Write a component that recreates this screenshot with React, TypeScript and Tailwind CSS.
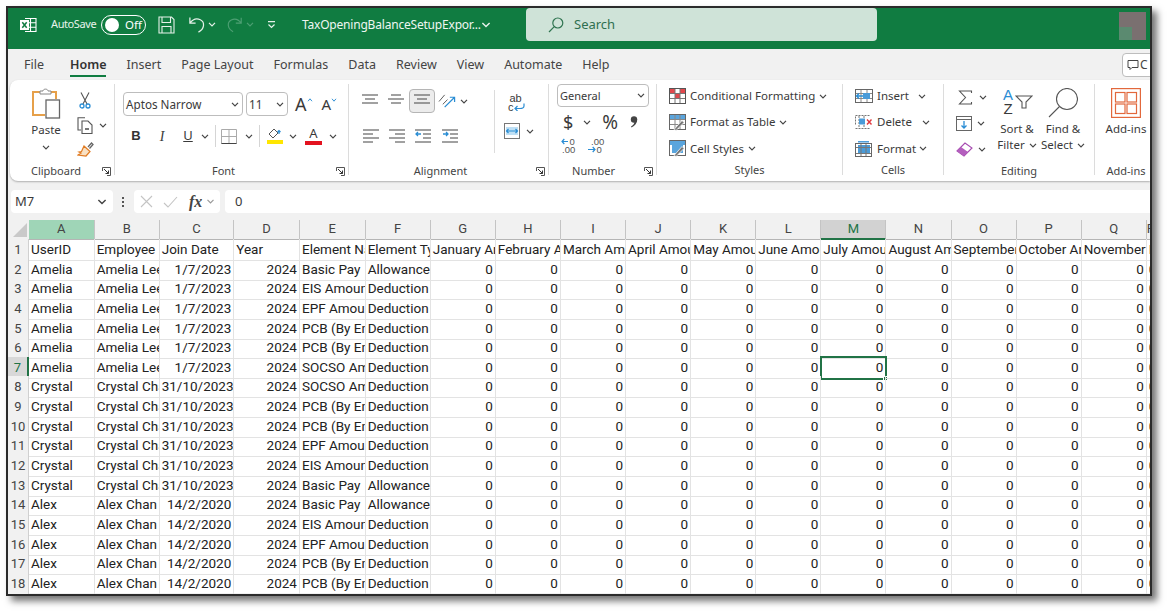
import React from 'react';
import type { ReactNode } from 'react';

const GRID =
  'grid grid-cols-[21px_65.7px_65px_74.6px_65.7px_65.7px_repeat(12,65.1px)_1fr]';

const columns = ['A', 'B', 'C', 'D', 'E', 'F', 'G', 'H', 'I', 'J', 'K', 'L', 'M', 'N', 'O', 'P', 'Q', 'R'];
const headers = [
  'UserID', 'Employee Name', 'Join Date', 'Year', 'Element Name', 'Element Type',
  'January Amount', 'February Amount', 'March Amount', 'April Amount', 'May Amount', 'June Amount',
  'July Amount', 'August Amount', 'September Amount', 'October Amount', 'November Amount', 'December Amount',
];

const BASIC = ['Basic Pay', 'Allowance'];
const EIS = ['EIS Amount', 'Deduction'];
const EPF = ['EPF Amount', 'Deduction'];
const PCB = ['PCB (By Employee)', 'Deduction'];
const SOCSO = ['SOCSO Amount', 'Deduction'];

const AMELIA = ['Amelia', 'Amelia Lee', '1/7/2023'];
const CRYSTAL = ['Crystal', 'Crystal Chan', '31/10/2023'];
const ALEX = ['Alex', 'Alex Chan', '14/2/2020'];

const rows = [
  [AMELIA, BASIC], [AMELIA, EIS], [AMELIA, EPF], [AMELIA, PCB], [AMELIA, PCB], [AMELIA, SOCSO],
  [CRYSTAL, SOCSO], [CRYSTAL, PCB], [CRYSTAL, PCB], [CRYSTAL, EPF], [CRYSTAL, EIS], [CRYSTAL, BASIC],
  [ALEX, BASIC], [ALEX, EIS], [ALEX, EPF], [ALEX, PCB], [ALEX, PCB],
];

const tabs = ['File', 'Home', 'Insert', 'Page Layout', 'Formulas', 'Data', 'Review', 'View', 'Automate', 'Help'];

function Chev({ className = '', color = '#444' }: { className?: string; color?: string }) {
  return (
    <svg viewBox="0 0 8 5" className={`h-[5px] w-[8px] shrink-0 ${className}`} fill="none" stroke={color} strokeWidth="1.2">
      <path d="M1 .8 4 3.8 7 .8" />
    </svg>
  );
}

function Launcher() {
  return (
    <svg viewBox="0 0 9 9" className="absolute right-[3px] top-[2px] h-[9px] w-[9px]" fill="none" stroke="#555" strokeWidth="1">
      <path d="M.5 4V.5H8.500V8.500H5" />
      <path d="M2 2 6.500 6.500M6.500 3.500V6.500H3.500" stroke="#333" />
    </svg>
  );
}

function Group({ className, label, labelClass = '', launcher, children }: { className: string; label: string; labelClass?: string; launcher?: boolean; children: ReactNode }) {
  return (
    <div className={`relative h-[91px] shrink-0 ${className}`}>
      <div className="h-[81px]">{children}</div>
      <div className={`relative h-[10px] text-center text-[11px] leading-[12px] text-[#444] ${labelClass}`}>
        {label}
        {launcher && <Launcher />}
      </div>
    </div>
  );
}

function Lines({ rows: lines, arrow }: { rows: [number, number][]; arrow?: 'in' | 'out' }) {
  return (
    <svg viewBox="0 0 16 14" className="h-[14px] w-[16px]" fill="none" stroke="#555" strokeWidth="1.1">
      {lines.map(([a, b], i) => (
        <path key={i} d={`M${a} ${1 + i * 4}H${b}`} />
      ))}
      {arrow === 'out' && <path d="M6 5H1M3 3 1 5 3 7" stroke="#2a8dd4" strokeWidth="1.3" />}
      {arrow === 'in' && <path d="M1 5H6M4 3 6 5 4 7" stroke="#2a8dd4" strokeWidth="1.3" />}
    </svg>
  );
}

function CondIcon() {
  return (
    <svg viewBox="0 0 17 16" className="h-[16px] w-[17px] shrink-0" fill="none">
      <rect x=".5" y=".5" width="16" height="15" stroke="#555" fill="#fff" />
      <rect x="1" y="1" width="5" height="4" fill="#e2484d" />
      <rect x="11" y="1" width="5" height="4" fill="#e2484d" />
      <rect x="6" y="6" width="5" height="4" fill="#e2484d" />
      <path d="M1 5.500H16M1 10.500H16M6 1V15M11 1V15" stroke="#777" />
    </svg>
  );
}

function TableIcon({ cell }: { cell?: boolean }) {
  return (
    <svg viewBox="0 0 17 17" className="h-[17px] w-[17px] shrink-0" fill="none">
      <rect x=".5" y=".5" width="16" height="15" stroke="#666" fill="#fff" />
      <rect x="1" y="1" width="15" height="4" fill="#5aa5dd" />
      {cell ? <rect x="3" y="5" width="11" height="8" fill="#5aa5dd" /> : <path d="M1 5.500H16M1 10.500H16M6 1V15M11 1V15" stroke="#888" />}
      <path d="M5 15.500 13 6.500 15 8.500 7 16.500Z" fill="#777" stroke="#fff" strokeWidth=".7" />
    </svg>
  );
}

function CellIcon({ kind }: { kind: 'insert' | 'delete' | 'format' }) {
  return (
    <svg viewBox="0 0 18 16" className="h-[16px] w-[18px] shrink-0" fill="none">
      {kind === 'format' ? (
        <>
          <rect x=".5" y="2.500" width="16" height="13" stroke="#666" />
          <rect x="3" y="4" width="12" height="9" fill="#4a9bd8" />
          <path d="M1 6.500H16M1 12.500H16M6 3V15M11 3V15" stroke="#777" />
          <path d="M3 .8H14" stroke="#3b93d6" strokeWidth="1.4" />
        </>
      ) : kind === 'insert' ? (
        <>
          <rect x=".5" y="1.500" width="17" height="13" stroke="#666" />
          <path d="M1 5.500H17M1 10.500H17M6 2V14M12 2V14" stroke="#888" />
          <rect x="8" y="5" width="7" height="6" fill="#4a9bd8" />
          <path d="M8 8H1.500M4 5.500 1.500 8 4 10.500" stroke="#2a8dd4" strokeWidth="1.3" />
        </>
      ) : (
        <>
          <path d="M.5 4.500V1.500H15M.5 14.500H15M.5 10.500V5.500M4 2V14M9 2V14" stroke="#777" strokeDasharray="2 1" />
          <rect x="4" y="4.500" width="6" height="6" fill="#4a9bd8" />
          <path d="M12 5.500 16.500 10.500M16.500 5.500 12 10.500" stroke="#e0393e" strokeWidth="1.4" />
        </>
      )}
    </svg>
  );
}

function Cell({ text, right, col }: { text: string; right?: boolean; col: number }) {
  return (
    <div
      className={`h-full overflow-hidden whitespace-nowrap border-r border-b border-[#e3e3e3] px-[2px] leading-[21px] ${
        right ? 'text-right' : 'text-left'
      } ${col === 17 ? 'border-r-0' : ''}`}
    >
      {text}
    </div>
  );
}

function SelectBox({ className, text }: { className: string; text: string }) {
  return (
    <div className={`flex items-center justify-between rounded-[4px] border border-[#bdbdbd] bg-white pl-[2px] pr-[3px] ${className}`}>
      <span className="whitespace-nowrap pt-[1px]">{text}</span>
      <Chev />
    </div>
  );
}

export default function App() {
  return (
    <div className="h-[614px] w-[1171px] overflow-hidden bg-white font-['Noto_Sans',sans-serif] text-[#3a3a3a]">
      <div className="ml-[6px] mt-[6px] h-[590px] w-[1146px] overflow-hidden border-2 border-r-[2px] border-[#2b2b2b] bg-[#f1f1f1] shadow-[5px_5px_7px_rgba(0,0,0,0.55)]">
        {/* Title bar */}
        <div className="flex h-[41px] items-center bg-[#107c41] pb-[8px] text-white">
          <svg viewBox="0 0 18 18" className="ml-[11px] h-[18px] w-[18px]" fill="none" stroke="#fff" strokeWidth="1.1">
            <path d="M6 2.500H17V15.500H6M11.500 2.500V15.500M6 6.800H17M6 11.200H17" />
            <rect x="1" y="4" width="9" height="10" fill="#fff" stroke="none" />
            <path d="M3.300 6.300 7.700 11.700M7.700 6.300 3.300 11.700" stroke="#107c41" strokeWidth="1.500" />
          </svg>
          <span className="ml-[14px] w-[44px] whitespace-nowrap text-[11px] tracking-[-0.4px] text-[#e8f3ec]">AutoSave</span>
          <div className="ml-[6px] flex h-[20px] w-[45px] items-center rounded-full border border-white pl-[3px]">
            <div className="h-[14px] w-[14px] rounded-full bg-white" />
            <span className="ml-[6px] text-[11.5px]">Off</span>
          </div>
          <svg viewBox="0 0 17 18" className="ml-[12px] h-[18px] w-[17px]" fill="none" stroke="#e6f1ea" strokeWidth="1.1">
            <path d="M1 1H13.500L16 3.500V17H1ZM4 1V6.500H12.500V1M4 17V10.500H13V17" />
          </svg>
          <svg viewBox="0 0 20 19" className="ml-[13px] h-[19px] w-[19px]" fill="none" stroke="#e6f1ea" strokeWidth="1.3">
            <path d="M2 2V8H8M2 8C5 4 9 2.500 13 4.500 18 7 17.500 14 11 17.500" />
          </svg>
          <Chev className="ml-[1px]" color="#e6f1ea" />
          <svg viewBox="0 0 20 19" className="ml-[9px] h-[19px] w-[18px]" fill="none" stroke="#4d9f73" strokeWidth="1.3">
            <path d="M18 2V8H12M18 8C15 4 11 2.500 7 4.500 2 7 2.500 14 9 17.500" />
          </svg>
          <Chev className="ml-[3px]" color="#4d9f73" />
          <svg viewBox="0 0 9 8" className="ml-[13px] h-[8px] w-[9px]" fill="none" stroke="#e6f1ea" strokeWidth="1.2">
            <path d="M1 .6H8M1.500 3.500 4.500 6.500 7.500 3.500" />
          </svg>
          <span className="ml-[26px] w-[176px] whitespace-nowrap text-[12px] tracking-[-0.2px] text-[#eef6f1]">TaxOpeningBalanceSetupExpor...</span>
          <Chev className="ml-[3px] h-[6px] w-[10px]" color="#e6f1ea" />
          <div className="ml-[35px] flex h-[33px] w-[351px] items-center rounded-[4px] bg-[#cfe3d8] pl-[22px] text-[#2f6f50]">
            <svg viewBox="0 0 16 16" className="h-[16px] w-[16px]" fill="none" stroke="#2f7450" strokeWidth="1.2">
              <circle cx="9.800" cy="6" r="5" />
              <path d="M6 9.800 1 15" />
            </svg>
            <span className="ml-[7px] pl-[3px] text-[13px]">Search</span>
          </div>
          <div className="relative ml-[242px] mt-[3px] h-[28px] w-[27px] bg-[#7a7070]">
            <div className="absolute bottom-0 left-0 h-[13px] w-[13px] bg-[#5b8a70]" />
          </div>
        </div>

        {/* Tabs */}
        <div className="relative flex h-[31px] items-center pl-[16px] pt-[1px] text-[12.5px] text-[#444]">
          {tabs.map((tab) => (
            <div key={tab} className={`relative ${tab === 'File' ? 'mr-[26px]' : 'mr-[20px]'} ${tab === 'Home' ? 'font-semibold text-[#333]' : ''}`}>
              {tab}
              {tab === 'Home' && <div className="absolute -bottom-[3px] left-0 right-0 h-[2px] bg-[#107c41]" />}
            </div>
          ))}
          <div className="absolute -right-[2px] top-[4px] flex h-[24px] w-[30px] items-center rounded-l-[4px] border border-[#bdbdbd] bg-white pl-[4px] text-[12px]">
            <svg viewBox="0 0 12 12" className="h-[12px] w-[12px] shrink-0" fill="none" stroke="#444">
              <path d="M1 1.500H11V8.500H5L3 10.500V8.500H1Z" />
            </svg>
            <span className="ml-[1px]">C</span>
          </div>
        </div>

        {/* Ribbon */}
        <div className="ml-[2px] flex h-[101px] rounded-l-[8px] bg-white py-[4px] text-[11.5px] shadow-[0_1px_2px_rgba(0,0,0,0.28)]">
          <Group className="w-[105px] border-r border-[#dcdcdc]" label="Clipboard" labelClass="pr-[12px]" launcher>
            <div className="flex">
              <div className="ml-[15px] flex w-[42px] flex-col items-center pt-[4px]">
                <svg viewBox="0 0 30 31" className="h-[31px] w-[30px]" fill="none">
                  <path d="M9 4H2V27H14" stroke="#e6a04a" strokeWidth="2" />
                  <path d="M20 4H25V11" stroke="#e6a04a" strokeWidth="2" />
                  <path d="M9 6V3H12C12 .5 17 .5 17 3H20V6Z" fill="#fff" stroke="#888" />
                  <rect x="15" y="12" width="13.500" height="18" fill="#fff" stroke="#666" strokeWidth="1.300" />
                </svg>
                <span className="mt-[3px] leading-[16px]">Paste</span>
                <Chev className="mt-[7px]" />
              </div>
              <div className="ml-[10px] flex flex-col">
                <div className="flex h-[25px] items-center pt-[8px]">
                  <svg viewBox="0 0 12 17" className="ml-[2px] h-[17px] w-[12px]" fill="none" stroke="#555" strokeWidth="1.100">
                    <path d="M2 .5 8 12M10 .5 4 12" />
                    <circle cx="3" cy="14" r="2" stroke="#2a8dd4" strokeWidth="1.300" />
                    <circle cx="9" cy="14" r="2" stroke="#2a8dd4" strokeWidth="1.300" />
                  </svg>
                </div>
                <div className="mt-[3px] flex h-[26px] items-center">
                  <svg viewBox="0 0 16 17" className="h-[17px] w-[16px]" fill="none" stroke="#555" strokeWidth="1.100">
                    <path d="M8 .8H1V13H4" />
                    <path d="M5 4H11L15 8V16.500H5Z" fill="#fff" />
                    <path d="M8 12H12" strokeWidth="2" stroke="#777" />
                  </svg>
                  <Chev className="ml-[6px]" />
                </div>
                <div className="flex h-[24px] items-center">
                  <svg viewBox="0 0 17 16" className="h-[16px] w-[17px]" fill="none">
                    <path d="M11 5 14.500 1 16 2.500 12.500 6.500" stroke="#666" strokeWidth="1.300" />
                    <path d="M7 4 13 9.500 9 14 1 13 4 11 2 10 4.500 9.500Z" fill="#f9e1c4" stroke="#e07b22" strokeWidth="1.200" />
                  </svg>
                </div>
              </div>
            </div>
          </Group>

          <Group className="w-[234px] border-r border-[#dcdcdc]" label="Font" labelClass="pr-[16px]" launcher>
            <div className="flex items-center pl-[8px] pt-[8px]">
              <SelectBox className="h-[24px] w-[120px] text-[11.7px]" text="Aptos Narrow" />
              <SelectBox className="ml-[3px] h-[24px] w-[42px] text-[11.7px]" text="11" />
              <span className="ml-[7px] text-[18px] leading-[18px]">A</span>
              <svg viewBox="0 0 7 5" className="mb-[8px] h-[4px] w-[6px]" fill="none" stroke="#2a8dd4" strokeWidth="1.200">
                <path d="M1 4 3.500 1 6 4" />
              </svg>
              <span className="ml-[9px] text-[15px] leading-[18px]">A</span>
              <svg viewBox="0 0 7 5" className="mb-[8px] h-[4px] w-[6px]" fill="none" stroke="#2a8dd4" strokeWidth="1.200">
                <path d="M1 1 3.500 4 6 1" />
              </svg>
            </div>
            <div className="mt-[9px] flex h-[22px] items-center pl-[8px]">
              <span className="w-[26px] text-center font-['Liberation_Sans'] text-[13px] font-bold text-[#333]">B</span>
              <span className="w-[26px] text-center font-['Liberation_Serif'] text-[14px] italic">I</span>
              <span className="w-[26px] text-center text-[13px] underline">U</span>
              <Chev />
              <div className="ml-[6px] h-[22px] w-px bg-[#d5d5d5]" />
              <svg viewBox="0 0 16 15" className="ml-[5px] h-[15px] w-[16px]" fill="none" stroke="#aaa">
                <path d="M.5 .5H15.500V14.500H.5ZM8 .5V14.500M.5 7.500H15.500" />
                <path d="M.5 14.500H15.500" stroke="#444" />
              </svg>
              <Chev className="ml-[8px]" />
              <div className="ml-[6px] h-[22px] w-px bg-[#d5d5d5]" />
              <div className="ml-[6px] flex w-[17px] flex-col items-center">
                <svg viewBox="0 0 16 11" className="h-[11px] w-[16px]" fill="none">
                  <path d="M7 1 2 6 6 10 11 5Z" stroke="#555" />
                  <path d="M12 6V2.500M10.500 4 12 2.500 13.500 4" stroke="#2a8dd4" strokeWidth="1.200" />
                </svg>
                <div className="mt-[1px] h-[4px] w-[16px] bg-[#ffe600]" />
              </div>
              <Chev className="ml-[6px]" />
              <div className="ml-[8px] flex w-[17px] flex-col items-center">
                <span className="text-[13px] leading-[13px]">A</span>
                <div className="mt-[1px] h-[4px] w-[17px] bg-[#e3121f]" />
              </div>
              <Chev className="ml-[7px]" />
            </div>
          </Group>

          <Group className="w-[200px] border-r border-[#dcdcdc]" label="Alignment" labelClass="pr-[16px]" launcher>
            <div className="flex h-[81px]">
              <div className="w-[145px] pl-[8px] pt-[5px]">
                <div className="flex h-[24px] items-center">
                  <div className="flex w-[26px] justify-center"><Lines rows={[[0, 16], [3, 13], [0, 16]]} /></div>
                  <div className="flex w-[26px] justify-center"><Lines rows={[[3, 13], [0, 16], [3, 13]]} /></div>
                  <div className="flex h-[24px] w-[26px] items-center justify-center rounded-[4px] border border-[#b5b5b5] bg-[#ececec]"><Lines rows={[[0, 16], [3, 13], [0, 16]]} /></div>
                  <svg viewBox="0 0 20 18" className="ml-[3px] h-[17px] w-[19px]" fill="none" stroke="#555" strokeWidth="1">
                    <path d="M1 9 7 2M5 12 10 7" />
                    <path d="M7 15 17 5M12.500 4.500H17.500V9.500" stroke="#2a8dd4" strokeWidth="1.300" />
                  </svg>
                  <Chev className="ml-[3px]" />
                </div>
                <div className="mt-[12px] flex h-[22px] items-center">
                  <div className="flex w-[27px] justify-center"><Lines rows={[[0, 16], [0, 10], [0, 16], [0, 10]]} /></div>
                  <div className="flex w-[26px] justify-center"><Lines rows={[[0, 16], [6, 16], [0, 16], [6, 16]]} /></div>
                  <div className="flex w-[26px] justify-center"><Lines rows={[[0, 16], [8, 16], [8, 16], [0, 16]]} arrow="out" /></div>
                  <div className="flex w-[27px] justify-center"><Lines rows={[[0, 16], [8, 16], [8, 16], [0, 16]]} arrow="in" /></div>
                </div>
              </div>
              <div className="my-[6px] h-[63px] w-px bg-[#dcdcdc]" />
              <div className="pl-[9px] pt-[10px]">
                <div className="flex w-[20px] flex-col items-center pl-[3px] font-['Liberation_Sans'] text-[11px] leading-[9px]">
                  <span>ab</span>
                  <span className="relative w-full pl-[1px]">
                    c
                    <svg viewBox="0 0 11 8" className="absolute left-[7px] top-0 h-[8px] w-[11px]" fill="none" stroke="#2a8dd4" strokeWidth="1.200">
                      <path d="M10 .5V3C10 5 8 5.500 6 5.500H1M3.500 3 1 5.500 3.500 8" />
                    </svg>
                  </span>
                </div>
                <div className="mt-[11px] flex items-center">
                  <svg viewBox="0 0 16 16" className="h-[16px] w-[16px]" fill="none" stroke="#777">
                    <rect x=".5" y=".5" width="15" height="15" />
                    <rect x="2" y="4" width="12" height="8" fill="#bfe0f5" stroke="none" />
                    <path d="M2.500 8H13.500M4.500 6 2.500 8 4.500 10M11.500 6 13.500 8 11.500 10" stroke="#2a8dd4" strokeWidth="1.200" />
                  </svg>
                  <Chev className="ml-[6px]" />
                </div>
              </div>
            </div>
          </Group>

          <Group className="w-[108px] border-r border-[#dcdcdc]" label="Number" labelClass="pr-[18px]" launcher>
            <div className="pl-[8px]">
              <SelectBox className="h-[23px] w-[92px] text-[11px]" text="General" />
              <div className="mt-[4px] flex h-[22px] items-center">
                <span className="ml-[6px] text-[18px] leading-[22px]">$</span>
                <Chev className="ml-[10px]" />
                <span className="ml-[11px] text-[19px] leading-[22px]">%</span>
                <svg viewBox="0 0 8 12" className="ml-[12px] h-[12px] w-[8px]" fill="#444">
                  <circle cx="4" cy="3.500" r="3.200" />
                  <path d="M7.200 3.500C7.200 7 5 10 1.500 11.500L1 10.500C3 9.500 4.500 7.500 4.500 5.500Z" />
                </svg>
              </div>
              <div className="mt-[4px] flex items-center">
                <svg viewBox="0 0 18 17" className="ml-[4px] h-[17px] w-[18px]" fill="none">
                  <path d="M7 4.500H1M3.300 2 1 4.500 3.300 7" stroke="#2a8dd4" strokeWidth="1.200" />
                  <text x="8.500" y="8" fontSize="9.500" fill="#555" fontFamily="Liberation Sans">0</text>
                  <text x="1" y="16" fontSize="9.500" fill="#555" fontFamily="Liberation Sans">.00</text>
                </svg>
                <svg viewBox="0 0 18 17" className="ml-[8px] h-[17px] w-[18px]" fill="none">
                  <text x="4" y="8" fontSize="9.500" fill="#555" fontFamily="Liberation Sans">.00</text>
                  <path d="M1 12.500H8M5.700 10 8 12.500 5.700 15" stroke="#2a8dd4" strokeWidth="1.200" />
                  <text x="9.500" y="16" fontSize="9.500" fill="#555" fontFamily="Liberation Sans">0</text>
                </svg>
              </div>
            </div>
          </Group>

          <Group className="w-[186px] border-r border-[#dcdcdc]" label="Styles">
            <div className="-mt-[1px] pl-[12px]">
              <div className="flex h-[26px] items-center"><CondIcon /><span className="ml-[4px]">Conditional Formatting</span><Chev className="ml-[4px]" /></div>
              <div className="flex h-[26px] items-center"><TableIcon /><span className="ml-[4px]">Format as Table</span><Chev className="ml-[4px]" /></div>
              <div className="flex h-[27px] items-center"><TableIcon cell /><span className="ml-[4px]">Cell Styles</span><Chev className="ml-[4px]" /></div>
            </div>
          </Group>

          <Group className="w-[101px] border-r border-[#dcdcdc]" label="Cells">
            <div className="-mt-[1px] pl-[12px]">
              <div className="flex h-[26px] items-center"><CellIcon kind="insert" /><span className="ml-[4px] w-[41px]">Insert</span><Chev /></div>
              <div className="flex h-[26px] items-center"><CellIcon kind="delete" /><span className="ml-[4px] w-[45px]">Delete</span><Chev /></div>
              <div className="flex h-[27px] items-center"><CellIcon kind="format" /><span className="ml-[4px] w-[42px]">Format</span><Chev /></div>
            </div>
          </Group>

          <Group className="w-[151px] border-r border-[#dcdcdc]" label="Editing">
            <div className="flex">
              <div className="w-[50px] pl-[12px]">
                <div className="flex h-[26px] items-center">
                  <svg viewBox="0 0 15 15" className="ml-[2px] h-[15px] w-[15px]" fill="none" stroke="#555" strokeWidth="1.100">
                    <path d="M13.500 3V1H1.500L7.500 7.500 1.500 14H13.500V12" />
                  </svg>
                  <Chev className="ml-[6px]" />
                </div>
                <div className="flex h-[26px] items-center">
                  <svg viewBox="0 0 16 15" className="h-[15px] w-[16px]" fill="none" stroke="#666">
                    <rect x=".5" y=".5" width="15" height="14" />
                    <path d="M1 3.500H15" />
                    <path d="M8 5V12M5.500 9.500 8 12 10.500 9.500" stroke="#2a8dd4" strokeWidth="1.300" />
                  </svg>
                  <Chev className="ml-[5px]" />
                </div>
                <div className="flex h-[27px] items-center">
                  <svg viewBox="0 0 17 15" className="h-[15px] w-[17px]" fill="none">
                    <path d="M1 9 9 1 16 6 8 14Z" fill="#fff" stroke="#a64bb0" strokeWidth="1.100" />
                    <path d="M1 9 5 5 12 10 8 14Z" fill="#b45fbe" />
                  </svg>
                  <Chev className="ml-[5px]" />
                </div>
              </div>
              <div className="flex w-[46px] flex-col items-center pt-[4px] leading-[16px]">
                <div className="flex h-[30px] items-start">
                  <div className="flex w-[14px] flex-col text-center font-['Liberation_Sans'] text-[15px] leading-[14px]">
                    <span className="text-[#2a8dd4]">A</span>
                    <span>Z</span>
                  </div>
                  <svg viewBox="0 0 18 14" className="mt-[7px] h-[14px] w-[18px]" fill="none" stroke="#555" strokeWidth="1.100">
                    <path d="M1 1H17L11 7V13H7V7Z" />
                  </svg>
                </div>
                <span className="mt-[3px] whitespace-nowrap">Sort &amp;</span>
                <span className="flex items-center whitespace-nowrap">Filter<Chev className="ml-[4px]" /></span>
              </div>
              <div className="flex w-[46px] flex-col items-center pt-[4px] leading-[16px]">
                <svg viewBox="0 0 30 30" className="h-[30px] w-[30px]" fill="none" stroke="#555" strokeWidth="1.100">
                  <circle cx="19" cy="11" r="10.500" />
                  <path d="M11.500 18.500 1 29" />
                </svg>
                <span className="mt-[3px] whitespace-nowrap">Find &amp;</span>
                <span className="flex items-center whitespace-nowrap">Select<Chev className="ml-[4px]" /></span>
              </div>
            </div>
          </Group>

          <Group className="w-[62px]" label="Add-ins">
            <div className="flex flex-col items-center pt-[4px]">
              <svg viewBox="0 0 30 30" className="h-[30px] w-[30px]" fill="none" stroke="#e2683c" strokeWidth="1.200">
                <rect x=".6" y=".6" width="28.800" height="28.800" />
                <rect x="4.500" y="4.500" width="9.500" height="9.500" />
                <rect x="16" y="4.500" width="9.500" height="9.500" />
                <rect x="4.500" y="16" width="9.500" height="9.500" />
                <rect x="16" y="16" width="9.500" height="9.500" />
              </svg>
              <span className="mt-[3px] leading-[16px]">Add-ins</span>
            </div>
          </Group>
        </div>

        {/* Formula bar */}
        <div className="mt-[9px] flex h-[23px] items-center pl-[3px] text-[13px]">
          <div className="flex h-full w-[102px] items-center justify-between rounded-[4px] bg-white pl-[4px] pr-[6px]">
            <span>M7</span>
            <Chev className="h-[6px] w-[10px]" />
          </div>
          <div className="ml-[9px] flex flex-col gap-[2px]">
            <div className="h-[2px] w-[2px] bg-[#555]" />
            <div className="h-[2px] w-[2px] bg-[#555]" />
            <div className="h-[2px] w-[2px] bg-[#555]" />
          </div>
          <div className="ml-[10px] flex h-full w-[86px] items-center rounded-[4px] bg-white pl-[6px]">
            <svg viewBox="0 0 13 13" className="h-[13px] w-[13px]" fill="none" stroke="#c4c4c4" strokeWidth="1.100">
              <path d="M1 1 12 12M12 1 1 12" />
            </svg>
            <svg viewBox="0 0 15 12" className="ml-[10px] h-[12px] w-[15px]" fill="none" stroke="#c4c4c4" strokeWidth="1.100">
              <path d="M1 7 5 11 14 1" />
            </svg>
            <span className="ml-[11px] font-['Liberation_Serif'] text-[16px] font-bold italic leading-[16px] text-[#444]">fx</span>
            <Chev className="ml-[4px] h-[5px] w-[9px]" color="#999" />
          </div>
          <div className="ml-[5px] flex h-full flex-1 items-center rounded-l-[4px] bg-white pl-[10px]">0</div>
        </div>

        {/* Column headers */}
        <div className={`${GRID} mt-[7px] h-[19px] font-['Roboto',sans-serif] text-[13px] text-[#444]`}>
          <div className="flex items-end justify-end border-b border-[#b5b5b5] pb-[2px] pr-[2px]">
            <svg viewBox="0 0 14 14" className="h-[14px] w-[14px]"><path d="M14 0V14H0Z" fill="#c9c9c9" /></svg>
          </div>
          {columns.map((col) => (
            <div
              key={col}
              className={`border-r text-center leading-[18px] ${
                col === 'M'
                  ? 'border-[#c4c4c4] border-b-2 border-b-[#217346] bg-[#d2d2d2] text-[#217346]'
                  : col === 'A'
                    ? 'border-[#c4c4c4] border-b border-b-[#b5b5b5] bg-[#9fd5b7]'
                    : 'border-[#c4c4c4] border-b border-b-[#b5b5b5]'
              }`}
            >
              {col}
            </div>
          ))}
        </div>

        {/* Sheet */}
        <div className="bg-white font-['Roboto',sans-serif] text-[13.5px] text-[#222]">
          <div className={`${GRID} h-[19.65px]`}>
            <div className="h-full border-r border-b border-[#d0d0d0] bg-[#f1f1f1] text-center text-[13px] leading-[21px] text-[#444]">1</div>
            {headers.map((h, i) => (
              <Cell key={h} text={h} col={i} />
            ))}
          </div>
          {rows.map(([person, element], i) => {
            const num = i + 2;
            return (
              <div key={num} className={`${GRID} h-[19.65px]`}>
                <div
                  className={`h-full border-b border-[#d0d0d0] text-center text-[13px] leading-[21px] ${
                    num === 7 ? 'border-r-2 border-r-[#217346] bg-[#d8d8d8] text-[#217346]' : 'border-r bg-[#f1f1f1] text-[#444]'
                  }`}
                >
                  {num}
                </div>
                <Cell text={person[0]} col={0} />
                <Cell text={person[1]} col={1} />
                <Cell text={person[2]} right col={2} />
                <Cell text="2024" right col={3} />
                <Cell text={element[0]} col={4} />
                <Cell text={element[1]} col={5} />
                {columns.slice(6).map((col, c) => (
                  <div key={col} className="relative">
                    <Cell text="0" right col={c + 6} />
                    {num === 7 && col === 'M' && (
                      <div className="absolute -inset-x-[1px] -inset-y-[1px] border-2 border-[#217346]">
                        <div className="absolute -bottom-[3px] -right-[3px] h-[5px] w-[5px] border border-white bg-[#217346]" />
                      </div>
                    )}
                  </div>
                ))}
              </div>
            );
          })}
        </div>
      </div>
    </div>
  );
}
